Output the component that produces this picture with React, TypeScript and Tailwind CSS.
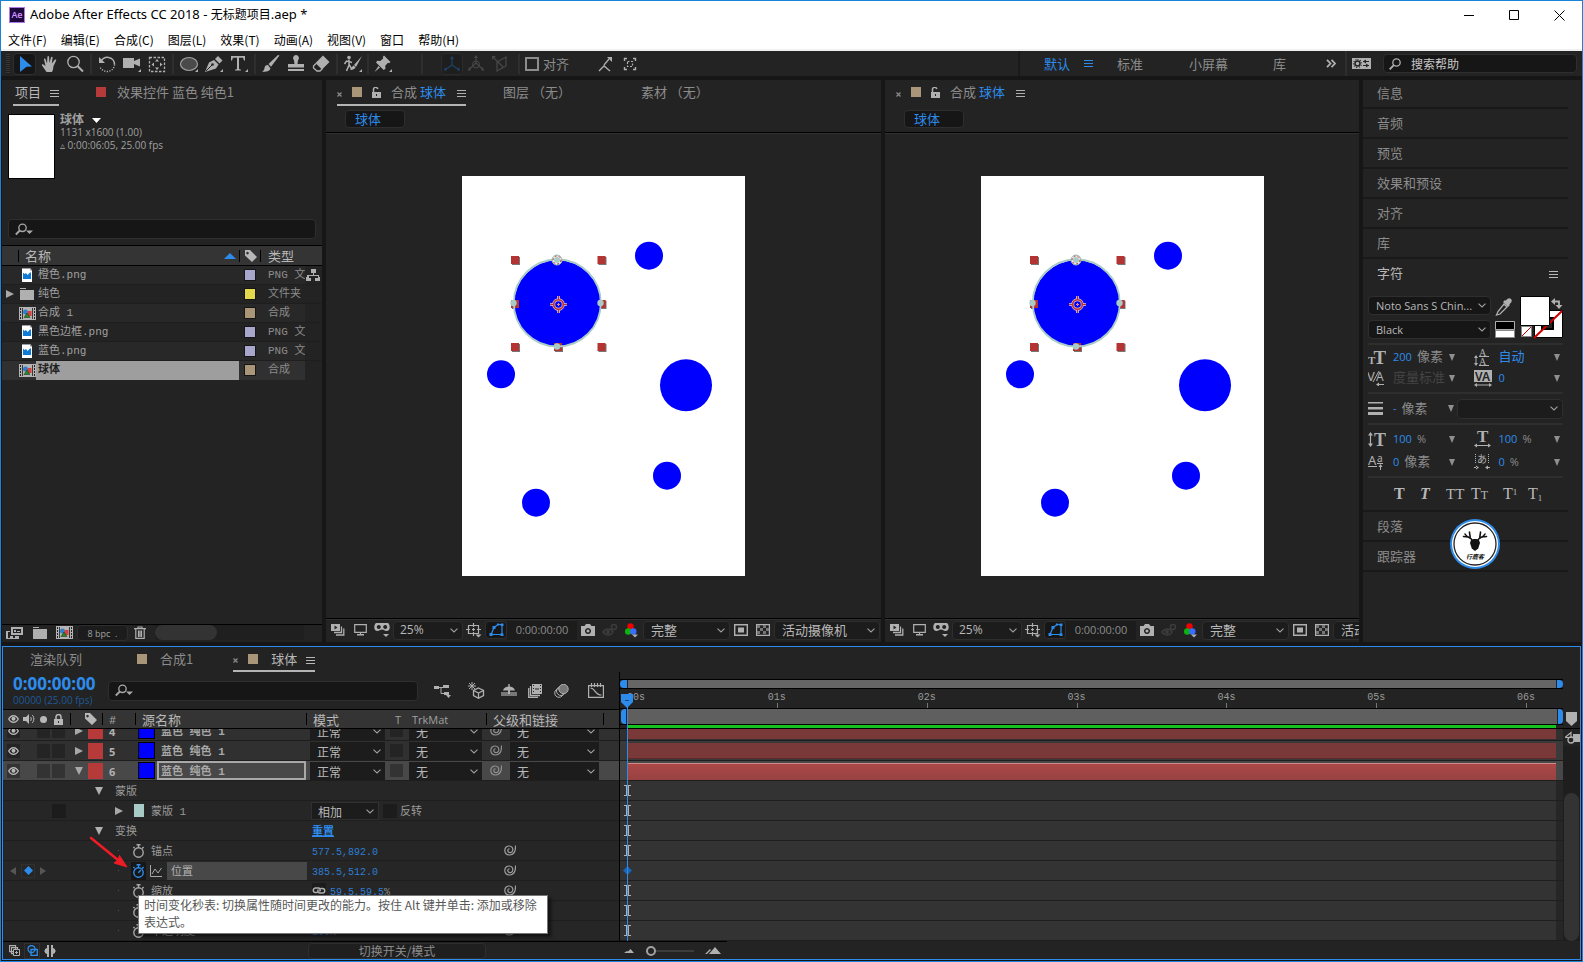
import React from "react";

type SvgProps = { w?: number; h?: number; vb?: string; className?: string; children: React.ReactNode };

function Svg({ w = 16, h = 16, vb, className = "", children }: SvgProps) {
  return (
    <svg width={w} height={h} viewBox={vb ?? `0 0 ${w} ${h}`} className={`shrink-0 ${className}`} fill="currentColor" aria-hidden="true">
      {children}
    </svg>
  );
}

const stroke = { fill: "none", stroke: "currentColor" } as const;

/* ---------- shared glyphs ---------- */

const MenuLines = ({ className = "" }: { className?: string }) => (
  <Svg w={9} h={8} className={className}>
    <path d="M0 0h9v1H0zM0 3h9v1H0zM0 6h9v1H0z" />
  </Svg>
);

const Chevron = () => (
  <Svg w={8} h={5}>
    <path {...stroke} d="M.5.7 4 4 7.500.7" strokeWidth="1.100" />
  </Svg>
);

const TriRight = () => (
  <Svg w={8} h={8}>
    <path d="M0 0v8l8-4z" />
  </Svg>
);

const TriDown = () => (
  <Svg w={8} h={8}>
    <path d="M0 0h8L4 8z" />
  </Svg>
);

const SmallDown = () => (
  <Svg w={6} h={7} className="text-[#8f8f8f]">
    <path d="M0 0h6L3 7z" />
  </Svg>
);

const Corner = () => <path d="M19 15v3h-3z" />;

const Tag = () => (
  <Svg w={13} h={12}>
    <path fillRule="evenodd" d="M1 0h5l7 7-5 5-7-6.500zM3.500 1.800a1.300 1.300 0 1 0 .01 0z" />
  </Svg>
);

const Eye = () => (
  <Svg w={11} h={8}>
    <path fillRule="evenodd" d="M5.500 0C8 0 10 1.800 11 4c-1 2.200-3 4-5.500 4S1 6.200 0 4c1-2.200 3-4 5.500-4zm0 1.200A5.500 5.500 0 0 0 1.400 4a5.500 5.500 0 0 0 4.100 2.800A5.500 5.500 0 0 0 9.600 4a5.500 5.500 0 0 0-4.100-2.800z" />
    <circle cx="5.500" cy="3.800" r="2" />
  </Svg>
);

const Lock = ({ open = false }: { open?: boolean }) => (
  <Svg w={9} h={11}>
    <path fillRule="evenodd" d="M0 5h9v6H0zM4 7v2h1V7z" />
    <path {...stroke} strokeWidth="1.500" d={open ? "M1.500 5V3a2.200 2.200 0 0 1 4.300-1" : "M2 5V3a2.500 2.500 0 0 1 5 0v2"} />
  </Svg>
);

const Whip = () => (
  <Svg w={12} h={11}>
    <path {...stroke} strokeWidth="1.200" d="M11.500.5c.2 3.500-.6 9-5.800 9.500C2.500 10.200.7 8 .8 5.300.9 2.500 3 .9 5.300 1c2.200.1 3.600 1.700 3.500 3.800C8.700 6.700 7.300 7.700 5.900 7.600 4.500 7.500 3.700 6.500 3.800 5.300c.1-1 .8-1.600 1.700-1.500" />
  </Svg>
);

const SearchDrop = () => (
  <Svg w={18} h={13}>
    <circle {...stroke} cx="7.500" cy="4.800" r="3.700" strokeWidth="1.300" />
    <path {...stroke} strokeWidth="1.800" d="M4.800 7.500.8 11.500" />
    <path d="M11 7.500h7l-3.500 3.500z" />
  </Svg>
);

const Stopwatch = ({ active = false }: { active?: boolean }) => (
  <Svg w={13} h={14}>
    <circle {...stroke} cx="6.500" cy="8.500" r="4.700" strokeWidth="1.400" />
    <path {...stroke} strokeWidth="1.400" d="M4.500.8h4M6.500 1v3M10.200 4.500l1.400-1.400M2.600 4.300 1.400 3.100" />
    {active && <path {...stroke} strokeWidth="1.300" d="M6.300 8.700 9 6" />}
  </Svg>
);

const CompIcon = () => (
  <Svg w={17} h={13}>
    <path fill="#b4b4b4" d="M0 0h17v13H0z" />
    <path fill="#232323" d="M1 1h1v2H1zM1 4h1v2H1zM1 7h1v2H1zM1 10h1v2H1zM15 1h1v2h-1zM15 4h1v2h-1zM15 7h1v2h-1zM15 10h1v2h-1z" />
    <path fill="#3a3a3a" d="M3 1h1v11H3zM13 1h1v11h-1z" />
    <circle cx="6.500" cy="5" r="2.500" fill="#2d7fd0" />
    <path fill="#d8423c" d="M8.500 4h4v5h-4z" />
    <path fill="#1e8d1e" stroke="#232323" strokeWidth=".5" d="m8 6 3 4.500H5z" />
  </Svg>
);

const FolderIcon = () => (
  <Svg w={14} h={12}>
    <path d="M0 0h6v1H0zM0 2h14v10H0z" />
  </Svg>
);

const PngIcon = () => (
  <Svg w={10} h={14}>
    <path fill="#fff" d="M0 0h8l2 2.500V14H0z" />
    <path fill="#9aa0a6" d="M0 0h8v1H0zM8 0v2.500h2z" />
    <path fill="#0f7bd8" d="M1 4.500l1.500 1.500L4 5l1.500 2L8 4.500h1V11H1z" />
  </Svg>
);

/* ---------- form controls ---------- */

function Select({ label, value, className, textClass = "text-[13px]" }: { label: string; value: string; className: string; textClass?: string }) {
  return (
    <label className={`relative flex min-w-0 items-center ${className}`}>
      <span className="sr-only">{label}</span>
      <select className={`h-full w-full appearance-none truncate bg-transparent pr-4 leading-4 text-[#b8b8b8] outline-none ${textClass}`} defaultValue={value}>
        <option>{value}</option>
      </select>
      <span className="pointer-events-none absolute right-1 text-[#a0a0a0]">
        <Chevron />
      </span>
    </label>
  );
}

/* ---------- window chrome ---------- */

function TitleBar() {
  return (
    <header className="bg-white text-black">
      <div className="flex h-7 items-center pl-2">
        <svg width="16" height="16" viewBox="0 0 16 16" aria-hidden="true">
          <rect x=".5" y=".5" width="15" height="15" fill="#1f0740" stroke="#b07ae0" />
          <text x="8" y="11" fontSize="9" textAnchor="middle" fill="#cf96fd" fontFamily="Open Sans" fontWeight="600">Ae</text>
        </svg>
        <h1 className="ml-[5px] font-['Noto_Sans','Noto_Sans_CJK_SC',sans-serif] text-[13px]">Adobe After Effects CC 2018 - <span className="text-xs">无标题项目</span>.aep *</h1>
        <div className="ml-auto flex">
          <button aria-label="最小化" className="flex h-7 w-[46px] items-center justify-center">
            <Svg w={10} h={10}><path d="M0 5h10v1H0z" /></Svg>
          </button>
          <button aria-label="最大化" className="flex h-7 w-11 items-center justify-center">
            <Svg w={10} h={10}><path {...stroke} d="M.5.5h9v9h-9z" /></Svg>
          </button>
          <button aria-label="关闭" className="flex h-7 w-[46px] items-center justify-center">
            <Svg w={11} h={11}><path {...stroke} d="m.5.5 10 10M10.500.5l-10 10" /></Svg>
          </button>
        </div>
      </div>
      <nav className="flex h-[22px] items-start gap-3.5 border-b-2 border-[#f0f0f0] pl-[7px] pt-[3px] text-xs leading-4">
        {["文件(F)", "编辑(E)", "合成(C)", "图层(L)", "效果(T)", "动画(A)", "视图(V)", "窗口", "帮助(H)"].map((m) => (
          <button key={m}>{m}</button>
        ))}
      </nav>
    </header>
  );
}

const Sep = ({ className = "w-[9px]" }: { className?: string }) => (
  <div className={`flex shrink-0 justify-center ${className}`}>
    <div className="h-5 w-0.5 bg-[#2e2e2e]" />
  </div>
);

function Tool({ name, active, dim, children }: { name: string; active?: boolean; dim?: boolean; children: React.ReactNode }) {
  return (
    <button
      aria-label={name}
      className={`flex h-[22px] w-[23px] shrink-0 items-center justify-center rounded-sm border ${active ? "border-[#2e2e2e] bg-[#161616] text-[#2d8ceb]" : "border-transparent"} ${dim ? "text-[#484848]" : active ? "" : "text-[#b0b0b0]"}`}
    >
      <Svg w={20} h={20}>{children}</Svg>
    </button>
  );
}

function Toolbar() {
  return (
    <div className="flex h-[25px] items-center bg-[#232323] text-[13px] text-[#8c8c8c]">
      <div className="mr-[3px] ml-[5px] h-5 w-1 bg-[repeating-linear-gradient(#3a3a3a_0_1px,#1c1c1c_1px_2px)]" />
      <div className="flex items-center gap-0.5">
        <Tool name="选取工具" active><path d="M5 2l12 10.500-5.500.3L5 18z" /></Tool>
        <Tool name="手形工具"><path d="M6.500 18 2 11.500c-.6-1 .6-1.700 1.400-1L5.500 12 4 5.500c-.2-1.200 1.200-1.500 1.500-.4L7 9.500 7.400 3c0-1.200 1.600-1.200 1.700 0l.3 6L11 3.500c.3-1.200 1.800-.9 1.600.3L11.800 9.500l3-3.700c.8-.9 1.900 0 1.300 1L13.500 12l-.5 3.500L12 18z" /></Tool>
        <Tool name="缩放工具"><circle {...stroke} cx="8.500" cy="8" r="5.700" strokeWidth="1.300" /><path {...stroke} strokeWidth="2" d="m12.500 12 5.500 5.500" /></Tool>
      </div>
      <Sep />
      <div className="flex items-center gap-0.5">
        <Tool name="旋转工具"><path {...stroke} strokeWidth="1.500" d="M4 7.500C5.500 4.500 8.500 3 11.500 3.400c3.500.5 6 3.500 6 7" /><path {...stroke} strokeWidth="1.400" strokeDasharray="1.200 1.400" d="M17.500 10.400c0 4-3.500 7.100-7.500 7.100-3 0-5.800-2-7-4.500" /><path d="M2 3v6h6z" /></Tool>
        <Tool name="摄像机工具"><path d="M1 4h11v3l6-2.500v8L12 10v4H1z" /><Corner /></Tool>
        <Tool name="锚点工具"><path {...stroke} strokeWidth="1.300" strokeDasharray="2.500 1.500" d="M2.500 3.500h15v14h-15z" /><path d="m10 5 2 2.500H8zM10 16l2-2.500H8zM4.500 10.500 7 8.500v4zM15.500 10.500 13 8.500v4z" /></Tool>
      </div>
      <Sep />
      <div className="flex items-center gap-0.5">
        <Tool name="椭圆工具"><ellipse cx="10" cy="10" rx="8.500" ry="6.500" fill="#4a4a4a" stroke="#a0a0a0" strokeWidth="1.200" /><Corner /></Tool>
        <Tool name="钢笔工具"><path d="M1 18 5 8.500 10 6l4.500 4.500L12 14.500z" /><path d="m11 5 3-3 4.500 4.500-3 3z" /><path stroke="#232323" strokeWidth="1" d="m2 17 6-6" /><circle cx="8.500" cy="10.500" r="1.300" fill="#232323" /><Corner /></Tool>
        <Tool name="文字工具"><path d="M2 2h14v4.500h-1L14 3.800h-4V15l2 .7v.8H6v-.8l2-.7V3.800H4L3 6.500H2z" /><Corner /></Tool>
      </div>
      <Sep />
      <div className="flex items-center gap-0.5">
        <Tool name="画笔工具"><path d="M18.500 1.500 17 1 7.500 10l2.500 2.800zM7 11c-2-.2-3.200 1-3.500 3C3.200 15.800 2.500 17 1 17.500c3.500.8 7.500 0 8.500-3z" /></Tool>
        <Tool name="仿制图章工具"><path d="M10 1a3 3 0 0 1 2 5.200L11.500 10H18v3.500H2V10h6.500L8 6.200A3 3 0 0 1 10 1zM2 15h16v2H2z" /></Tool>
        <Tool name="橡皮擦工具"><path d="M12 1.500 18.500 8 11 15.500 4.500 9z" /><path {...stroke} strokeWidth="1.300" d="M5 9.500 2.500 12v2L6 17h3l2.500-2.500" /></Tool>
      </div>
      <Sep />
      <Tool name="Roto 笔刷工具"><circle cx="6" cy="3.500" r="1.800" /><path {...stroke} strokeWidth="1.500" d="M6 5.500v5.500l-2.500 6M6 10.500l3 5M1.500 10l2-3L9 8.500" /><path d="M19 2 11 11l2 2zM10.500 11.500c-2 1-1.500 3-3.500 4 2.500.7 5-.3 5.500-2.200z" /><Corner /></Tool>
      <Sep className="w-[7px]" />
      <Tool name="操控点工具"><path d="m11 1.500 6.500 6.500-1.500 1.200-1-.4-2.800 3 .3 3L10.700 16 3 8.500l1.300-1.800 3 .3 3-2.800-.5-1.200zM5.500 12 7 13.500 1.500 18z" /><Corner /></Tool>
      <Sep className="ml-[21px] w-[14px]" />
      <div className="ml-3 flex items-center gap-px">
        <button aria-label="本地轴模式" className="flex size-[22px] items-center justify-center rounded-sm border border-[#2b2b2b] bg-[#1e1e1e] text-[#1d4469]">
          <Svg w={18} h={18}><path {...stroke} strokeWidth="1.200" d="M9 3v7L2 15M9 10l7 5" /><path d="m9 1 2 3H7zM1 16l1-4 2 3zM17 16l-1-4-2 3z" /></Svg>
        </button>
        <Tool name="世界轴模式" dim><path {...stroke} strokeWidth="1.200" d="M10 4v5L3 15.500M10 9l7 6.500" /><circle {...stroke} cx="10" cy="10.500" r="3.500" /><path d="m10 1 2 3H8zM2 17l1-4 2 3zM18 17l-1-4-2 3z" /></Tool>
        <Tool name="视图轴模式" dim><path {...stroke} strokeWidth="1.200" d="m4 4 9 9M7 8l9-5v9l-9 5z" /><path d="M2 2h4L2 6z" /></Tool>
      </div>
      <Sep className="ml-1 w-[7px]" />
      <label className="ml-[3px] flex items-center gap-1">
        <input type="checkbox" className="size-3.5 appearance-none border-2 border-[#8c8c8c]" />
        对齐
      </label>
      <div className="ml-6 flex items-center gap-0.5">
        <Tool name="对齐选项"><path {...stroke} strokeWidth="1.300" d="M4 17l5-5 6 5M9 11l5-6" /><path d="M12 3h5v5z" /></Tool>
        <Tool name="捕捉范围"><path {...stroke} strokeWidth="1.400" d="M4.500 7V4.500H7M13 4.500h2.500V7M15.500 13v2.500H13M7 15.500H4.500V13" /><path {...stroke} strokeDasharray="2 1.500" strokeWidth="1.200" d="M7.500 7.500h5v5h-5z" /></Tool>
      </div>

      <div className="ml-auto flex items-center">
        <div className="h-[25px] w-0.5 bg-[#1a1a1a]" />
        <button className="ml-6 text-[#2d8ceb]">默认</button>
        <button aria-label="工作区菜单" className="ml-3.5 text-[#2d8ceb]"><MenuLines /></button>
        <button className="ml-6">标准</button>
        <button className="ml-[46px]">小屏幕</button>
        <button className="ml-[45px]">库</button>
        <button aria-label="更多工作区" className="ml-10 text-[#b0b0b0]">
          <Svg w={10} h={9}><path {...stroke} strokeWidth="1.800" d="M1 .8 4.500 4.500 1 8.200M5.500.8 9 4.500 5.500 8.200" /></Svg>
        </button>
        <div className="ml-[9px] h-[25px] w-0.5 bg-[#2e2e2e]" />
        <button aria-label="工作区设置" className="ml-[5px] text-[#b0b0b0]">
          <Svg w={19} h={11}>
            <path d="M0 0h19v11H0z" />
            <circle cx="5.500" cy="5.500" r="2.500" fill="none" stroke="#232323" strokeWidth="1.500" />
            <path stroke="#232323" strokeWidth="1.200" strokeDasharray="1 1.500" fill="none" d="M5.500 1.500a4 4 0 1 1-.01 0" />
            <path fill="none" stroke="#232323" strokeWidth="1.200" d="M11 3.500h6M11 7.500h6" /><path fill="#232323" d="m11 3.500 3-2v4zM17 7.500l-3-2v4z" />
          </Svg>
        </button>
        <label className="mr-[5px] ml-3 flex h-[19px] w-[194px] items-center gap-2.5 rounded-sm border border-[#2e2e2e] bg-[#161616] pl-[5px] text-[#b0b0b0]">
          <Svg w={12} h={12}><circle {...stroke} cx="7.500" cy="4.500" r="3.700" strokeWidth="1.300" /><path {...stroke} strokeWidth="1.900" d="M4.800 7.200.7 11.300" /></Svg>
          <input aria-label="搜索帮助" placeholder="搜索帮助" className="min-w-0 flex-1 bg-transparent text-xs outline-none placeholder:text-[#c8c8c8]" />
        </label>
      </div>
    </div>
  );
}

/* ---------- project panel ---------- */

type Asset = { name: string; kind: "png" | "folder" | "comp"; type: string; color: string; selected?: boolean };

const assets: Asset[] = [
  { name: "橙色.png", kind: "png", type: "PNG 文件", color: "bg-[#a8a6cb]" },
  { name: "纯色", kind: "folder", type: "文件夹", color: "bg-[#e4d84c]" },
  { name: "合成 1", kind: "comp", type: "合成", color: "bg-[#a99577]" },
  { name: "黑色边框.png", kind: "png", type: "PNG 文件", color: "bg-[#a8a6cb]" },
  { name: "蓝色.png", kind: "png", type: "PNG 文件", color: "bg-[#a8a6cb]" },
  { name: "球体", kind: "comp", type: "合成", color: "bg-[#a99577]", selected: true },
];

function ProjectPanel() {
  return (
    <section className="flex w-[320px] shrink-0 flex-col bg-[#232323]">
      <div className="flex h-[26px] items-end text-[13px]">
        <div className="ml-[11px] flex h-full w-[46px] items-center justify-between border-b-2 border-[#b4b4b4] pl-0.5 text-[#b8b8b8]">
          项目 <MenuLines className="mt-1" />
        </div>
        <div className="ml-[37px] flex h-full items-center pb-0.5 text-[#8c8c8c]">
          <span className="mr-[11px] size-2.5 bg-[#b63a3a]" />
          效果控件 蓝色 纯色1
        </div>
      </div>
      <div className="flex px-1.5 pt-2">
        <div className="h-[65px] w-[47px] border border-black bg-white" />
        <div className="pl-[5px] font-['Open_Sans','Noto_Sans_CJK_SC',sans-serif] text-[10px] leading-[13px] text-[#a0a0a0]">
          <div className="flex items-center gap-2 text-xs leading-3 font-bold">
            球体
            <Svg w={9} h={5} className="text-white"><path d="M0 0h9L4.500 5z" /></Svg>
          </div>
          <div>1131 x1600 (1.00)</div>
          <div>▵ 0:00:06:05, 25.00 fps</div>
        </div>
      </div>
      <label className="mt-10 mr-1.5 ml-1.5 flex h-5 items-center rounded-sm border border-[#2e2e2e] bg-[#161616] pl-1.5 text-[#a8a8a8]">
        <SearchDrop />
        <input aria-label="搜索项目" className="min-w-0 flex-1 bg-transparent text-xs outline-none" />
      </label>
      <div className="mt-1.5 flex-1">
        <table className="w-full table-fixed border-collapse font-['Liberation_Mono','Noto_Sans_CJK_SC',monospace] text-[11px] text-[#a0a0a0]">
          <colgroup>
            <col className="w-[34px]" />
            <col className="w-[203px]" />
            <col className="w-[22px]" />
            <col />
            <col className="w-[17px]" />
          </colgroup>
          <thead>
            <tr className="h-5 border-y border-black bg-[#343434] text-left font-['Noto_Sans_CJK_SC',sans-serif] text-[13px] leading-4 text-[#b8b8b8]">
              <th colSpan={2} className="p-0 font-normal">
                <div className="flex items-center">
                  <span className="mr-1.5 ml-4 h-3 w-px bg-black" />
                  名称
                  <Svg w={12} h={6} className="mr-[3px] ml-auto text-[#2d8ceb]"><path d="M6 0l6 6H0z" /></Svg>
                </div>
              </th>
              <th className="p-0"><div className="flex h-3 items-center justify-center border-x border-black"><Tag /></div></th>
              <th colSpan={2} className="p-0 pl-[7px] font-normal">类型</th>
            </tr>
          </thead>
          <tbody>
            {assets.map((a) => (
              <tr key={a.name} className={`h-[19px] leading-[18px] ${a.selected ? "bg-[#303030]" : "border-b border-[#1e1e1e] odd:bg-[#282828]"}`}>
                <td className="p-0">
                  <div className="flex items-center justify-end">
                    {a.kind === "folder" && <span className="mr-1 text-[#a8a8a8]"><TriRight /></span>}
                    <span className="flex w-[18px] justify-center text-[#b0b0b0]">
                      {a.kind === "png" ? <PngIcon /> : a.kind === "folder" ? <FolderIcon /> : <CompIcon />}
                    </span>
                  </div>
                </td>
                <td className={`p-0 pl-0.5 ${a.selected ? "bg-[#9e9e9e] font-bold text-[#202020]" : ""}`}>{a.name}</td>
                <td className="p-0"><div className={`mx-auto size-2.5 outline outline-[#161616] ${a.color}`} /></td>
                <td className="overflow-hidden p-0 pl-[7px] whitespace-nowrap text-[#8c8c8c]">{a.type}</td>
                <td className="bg-[#232323] p-0 text-[#b0b0b0]">
                  {a.name === "橙色.png" && (
                    <Svg w={14} h={13} className="ml-px"><path d="M5 0h5v4H8v2h5v2h1v4H9V9h3V7H3v2h2v3H0V8h1V6h6V4H5z" /></Svg>
                  )}
                </td>
              </tr>
            ))}
          </tbody>
        </table>
      </div>
      <footer className="flex h-[18px] items-center border-t border-black pb-0.5 text-[#b0b0b0]">
        <button aria-label="解释素材" className="ml-1">
          <Svg w={17} h={12}><path fillRule="evenodd" d="M5 0h12v8H5zM7 2v4h8V2zM8 3h2v2H8zM11 4h3v1h-3zM1 4h3v1H2v6h11v1H0V4zM4 9h3v2H4zM9 9h4v2H9z" /></Svg>
        </button>
        <button aria-label="新建文件夹" className="ml-2.5"><FolderIcon /></button>
        <button aria-label="新建合成" className="ml-[9px]"><CompIcon /></button>
        <button className="ml-1 h-4 w-[51px] rounded-sm border border-[#2e2e2e] bg-[#1c1c1c] font-['Open_Sans',sans-serif] text-[9px] leading-[15px] text-[#a0a0a0]">8 bpc &nbsp;.</button>
        <button aria-label="删除" className="ml-1.5">
          <Svg w={12} h={13}><path {...stroke} strokeWidth="1.200" d="M0 2.600h12M4 2.500V1h4v1.500M1.800 3v9.400h8.400V3M4.500 4.500v6.500M6 4.500v6.500M7.500 4.500v6.500" /></Svg>
        </button>
        <div className="mr-[18px] ml-[9px] h-[15px] flex-1 bg-[#1f1f1f]"><div className="h-[15px] w-[62px] rounded-full bg-[#333]" /></div>
      </footer>
    </section>
  );
}

/* ---------- composition viewer ---------- */

const dots = [
  [187, 79.7, 14],
  [39, 198.3, 14],
  [224, 209.3, 26],
  [205, 299.7, 14],
  [74, 326.7, 14],
];

const handles = [
  [53, 84], [139.5, 84], [53, 128], [139.5, 128], [53, 171], [96, 171], [139.5, 171],
];

function Canvas() {
  return (
    <svg width="283" height="400" viewBox="0 0 283 400" role="img" aria-label="球体" className="shrink-0 bg-white">
      {dots.map(([x, y, r]) => <circle key={`${x}-${y}`} cx={x} cy={y} r={r} fill="#00f" />)}
      {handles.map(([x, y]) => (
        <g key={`${x}-${y}`}>
          <rect x={x - 3} y={y - 3} width="8" height="8" fill="#777" />
          <rect x={x - 4} y={y - 4} width="8" height="8" fill="#b43434" />
        </g>
      ))}
      <circle cx="95.500" cy="127.500" r="43.300" fill="#00f" />
      <path fill="#b43434" d="M51.500 124H57v8h-5.500zM92 167h8v4h-8zM138 124h5.500v8H138z" />
      <circle cx="95.300" cy="127" r="43.500" fill="none" stroke="#a9cbc8" strokeWidth="1.800" />
      <circle cx="95" cy="84" r="5" fill="#eee" stroke="#9dbdba" />
      <circle cx="95" cy="84" r="4" fill="none" stroke="#b43434" strokeDasharray="2 2" />
      <circle cx="95" cy="84" r="3" fill="#a9cbc8" />
      <circle cx="51.500" cy="127" r="3.200" fill="#a9cbc8" />
      <circle cx="138.500" cy="127" r="3.200" fill="#a9cbc8" />
      <circle cx="95" cy="170.500" r="3.200" fill="#a9cbc8" />
      <g fill="none">
        <path stroke="#e8c8d8" strokeWidth="2.600" d="M96.500 120v5M96.500 132v5M88 128.500h5M100 128.500h5" />
        <circle cx="96.500" cy="128.500" r="4.800" stroke="#d8b8d0" strokeWidth="3" />
        <circle cx="96.500" cy="128.500" r="4.800" stroke="#b43434" strokeWidth="1.600" />
        <path stroke="#b43434" d="M96.500 120v4M96.500 133v4M88 128.500h4M101 128.500h4" />
        <path stroke="#e08890" d="M96.500 127v3M95 128.500h3" />
      </g>
    </svg>
  );
}

const IconBtn = ({ name, className = "", children }: { name: string; className?: string; children: React.ReactNode }) => (
  <button aria-label={name} className={`flex h-[18px] w-[22px] shrink-0 items-center justify-center ${className}`}>
    {children}
  </button>
);

function Viewer({ className, full }: { className: string; full?: boolean }) {
  return (
    <section className={`flex min-w-0 flex-col overflow-hidden bg-[#232323] ${className}`}>
      <div className="flex h-[26px] items-start text-[13px] text-[#8c8c8c]">
        <div className={`ml-[11px] flex h-[26px] w-[129px] shrink-0 items-center border-b-2 ${full ? "border-[#b4b4b4]" : "border-transparent"}`}>
          <Svg w={5} h={5} className="mt-1"><path {...stroke} strokeWidth="1.200" d="m.5.5 4 4M4.500.5l-4 4" /></Svg>
          <span className="ml-2.5 size-2.5 bg-[#a99577]" />
          <span className="mr-2.5 ml-2.5 text-[#b0b0b0]"><Lock open /></span>
          合成&nbsp;<span className="text-[#2d8ceb]">球体</span>
          <MenuLines className="mt-1 ml-auto text-[#b0b0b0]" />
        </div>
        {full && (
          <>
            <button className="ml-[37px] h-6 shrink-0">图层 （无）</button>
            <button className="ml-[70px] h-6 shrink-0">素材 （无）</button>
          </>
        )}
      </div>
      <div className="flex h-[28px] items-start border-b border-[#303030] pt-1 pl-[19px] shadow-[inset_0_-1px_0_#000]">
        <button className="h-[18px] w-[60px] rounded-sm border border-[#2e2e2e] bg-[#161616] pl-[9px] text-left text-[13px] leading-[14px] text-[#2d8ceb]">球体</button>
      </div>
      <div className="flex flex-1 items-center justify-center py-6">
        <Canvas />
      </div>
      <footer className="flex h-6 shrink-0 items-center border-t border-black pb-px pl-px text-[#b0b0b0] shadow-[inset_0_1px_0_#303030]">
        <IconBtn name="始终预览此视图"><Svg w={14} h={12}><path fillRule="evenodd" d="M0 0h9v7H0zM3.500 1.500v4L6.500 3.500z" /><path {...stroke} strokeWidth="1.300" d="M10.500 2.500v6H3M12.800 4.500v6.500H5" /></Svg></IconBtn>
        <IconBtn name="主查看器"><Svg w={13} h={12}><path {...stroke} strokeWidth="1.200" d="M.7.700h11.600v7.600H.7z" /><path d="M6 8h1v2h3v1.500H3V10h3z" /></Svg></IconBtn>
        <IconBtn name="3D 眼镜"><Svg w={16} h={14}><path fillRule="evenodd" d="M2 0h12c2.500 2 2.500 8-1.500 8-2 0-2.500-1.500-4.500-1.500S5.500 8 3.500 8C-.5 8-.5 2 2 0zM4.800 2a2 2 0 1 0 .01 0zM11.200 2a2 2 0 1 0 .01 0z" /><path d="M9 11h6l-3 3z" /></Svg></IconBtn>
        <Select label="放大率" value="25%" className="h-[19px] w-[70px] shrink-0 rounded-sm border border-[#2e2e2e] bg-[#1c1c1c] pl-1.5" textClass="text-xs font-['Open_Sans',sans-serif]" />
        <IconBtn name="网格和参考线"><Svg w={16} h={15}><path {...stroke} strokeWidth="1.200" d="M2.500 2.500h10v8h-10zM7.500 0v4M7.500 9v4M0 6.500h4M11 6.500h4M6 6.500h3M7.500 5v3" /><path d="M9.500 11.500h6l-3 3z" /></Svg></IconBtn>
        <IconBtn name="切换蒙版" className="rounded-sm border border-[#2e2e2e] bg-[#161616] text-[#2d8ceb]"><Svg w={15} h={14}><path {...stroke} strokeWidth="1.200" d="M2 11.500 5 4.500l4-3h4v10z" /><path d="M.5 10h3v3h-3zM3.500 3h3v3h-3zM8 .5h2v2H8zM11.500.5h3v2.500h-3zM11.500 10.500h3v2.500h-3z" /></Svg></IconBtn>
        <button className="h-[19px] w-[70px] shrink-0 bg-[#1c1c1c] text-center font-['Open_Sans',sans-serif] text-[11px] text-[#8c8c8c]">0:00:00:00</button>
        <IconBtn name="拍摄快照"><Svg w={14} h={12}><path fillRule="evenodd" d="M0 2h3.500L5 0h4l1.500 2H14v10H0zM7 4a3 3 0 1 0 .01 0zM7 5.500a1.500 1.500 0 1 1-.01 0z" /></Svg></IconBtn>
        <IconBtn name="显示快照" className="text-[#3c3c3c]"><Svg w={16} h={14}><path {...stroke} strokeWidth="1.600" d="M1 9c3-4 8-4 10 0-2 4-7 4-10 0z" /><circle cx="6" cy="9" r="2" /><circle {...stroke} cx="12" cy="4" r="2.500" strokeWidth="1.500" /></Svg></IconBtn>
        <IconBtn name="显示通道"><Svg w={14} h={15}><circle cx="5.500" cy="3.500" r="3.200" fill="#f20000" /><circle cx="3.200" cy="8.500" r="3.200" fill="#0db30d" /><circle cx="8.300" cy="8.500" r="3.200" fill="#3a6cff" /><path d="M7 11.500h6l-3 3z" /></Svg></IconBtn>
        <Select label="分辨率" value="完整" className="h-[19px] w-[87px] shrink-0 rounded-sm border border-[#2e2e2e] bg-[#1c1c1c] pl-[7px]" />
        <IconBtn name="目标区域"><Svg w={14} h={12}><path {...stroke} strokeWidth="1.400" d="M.7.700h12.600v10.600H.7z" /><path d="M4 3.500h6v5H4z" /></Svg></IconBtn>
        <IconBtn name="透明网格"><Svg w={14} h={12}><path {...stroke} strokeWidth="1.200" d="M.6.600h12.800v10.800H.6z" /><path fill="#777" d="M1 1h3v3H1zM7 1h3v3H7zM4 4h3v3H4zM10 4h3v3h-3zM1 7h3v3H1zM7 7h3v3H7z" /></Svg></IconBtn>
        <Select label="3D 视图" value="活动摄像机" className="h-[19px] w-[106px] shrink-0 rounded-sm border border-[#2e2e2e] bg-[#1c1c1c] pl-[7px]" />
      </footer>
    </section>
  );
}

/* ---------- right-hand panels ---------- */

const Rule = ({ className = "" }: { className?: string }) => <div className={`h-0.5 bg-[#2e2e2e] ${className}`} />;

function Metric({ icon, value, unit, blueUnit, dim }: { icon: React.ReactNode; value: string; unit?: string; blueUnit?: boolean; dim?: boolean }) {
  return (
    <div className="flex h-5 items-center">
      <span className="flex w-[25px] shrink-0 items-center text-[#b0b0b0]">{icon}</span>
      <button className={`font-['Open_Sans','Noto_Sans_CJK_SC',sans-serif] ${dim ? "text-[13px] text-[#444]" : blueUnit ? "text-[13px] text-[#2d8ceb]" : "text-[11px] text-[#2d8ceb]"}`}>{value}</button>
      {unit && <span className={`ml-[5px] font-['Open_Sans','Noto_Sans_CJK_SC',sans-serif] text-[#8c8c8c] ${unit === "%" ? "text-[11px]" : "text-[13px]"}`}>{unit}</span>}
      <span className="mr-[3px] ml-auto"><SmallDown /></span>
    </div>
  );
}

const serif = "Liberation Serif";
const Glyph = ({ x, y, size, children }: { x: number; y: number; size: number; children: string }) => (
  <text x={x} y={y} fontSize={size} fontFamily={serif} fontWeight="700">{children}</text>
);

function CharacterPanel() {
  return (
    <div className="pl-[5px]">
      <div className="w-[195px]">
        <div className="flex pt-[9px]">
          <div className="flex flex-col gap-[5px]">
            <Select label="字体" value="Noto Sans S Chin..." className="h-[19px] w-[123px] rounded-sm border border-[#2e2e2e] bg-[#161616] pl-[7px]" textClass="text-[11px] font-['Open_Sans',sans-serif]" />
            <Select label="字体样式" value="Black" className="h-[19px] w-[123px] rounded-sm border border-[#2e2e2e] bg-[#161616] pl-[7px]" textClass="text-[11px] font-['Open_Sans',sans-serif]" />
          </div>
          <button aria-label="颜色" className="ml-1 text-[#b0b0b0]">
            <Svg w={68} h={43}>
              <path {...stroke} strokeWidth="1.300" d="m9 8 3 3-7 7-3.500 1L3 15.500z" />
              <path d="m8 6 2-2 .8.8C12 2.500 14.500 1.500 16 3c1.500 1.500.5 4-1.800 5.200L15 9l-2 2z" />
              <path fill="#000" stroke="#b0b0b0" d="M.5 25.500h19v8H.5z" />
              <path fill="#fff" stroke="#888" d="M.5 34.500h19v7H.5z" />
              <path fill="#fff" stroke="#000" d="M39.500 14.500h28v27h-28z" />
              <path fill="#232323" stroke="#000" strokeWidth="2" d="M47 22h11v11H47z" />
              <path stroke="#c00" strokeWidth="2" d="m39 42 28-27" />
              <path fill="#fff" stroke="#888" d="M26.500 30.500h10v10h-10z" />
              <path stroke="#c00" d="m27 40 9-9" />
              <path fill="#fff" stroke="#000" d="M25.500.5h29v29h-29z" />
              <path {...stroke} strokeWidth="1.800" d="M59 5.500h5V11" />
              <path d="M56 5.500 60 2v7zM60.500 9h7L64 13z" />
            </Svg>
          </button>
        </div>
        <Rule className="mt-1" />
        <div className="grid grid-cols-2 gap-x-4 gap-y-px pt-0.5 pb-1">
          <Metric icon={<Svg w={18} h={14}><Glyph x={5.5} y={13.5} size={19}>T</Glyph><Glyph x={0} y={13.5} size={11}>T</Glyph></Svg>} value="200" unit="像素" />
          <Metric icon={<Svg w={17} h={18}><text x="5" y="8" fontSize="10" fontFamily={serif}>A</text><text x="5" y="17" fontSize="10" fontFamily={serif}>A</text><path {...stroke} d="M5 8.500h10M5 17.500h10M2 8v8" /><path d="m2 7 2 3H0zM2 18l2-3H0z" /></Svg>} value="自动" blueUnit />
          <Metric icon={<Svg w={18} h={16}><text x="-1" y="11" fontSize="13" fontFamily="Noto Sans">V</text><text x="8" y="11" fontSize="12" fontFamily="Noto Sans">A</text><path {...stroke} d="m5 12 6-11M10 14.500h6" /><path d="m8 14.500 3-2v4z" /></Svg>} value="度量标准" dim />
          <Metric icon={<Svg w={18} h={17}><path d="M0 0h18v12H0z" /><text x="1" y="10.500" fontSize="12" fontFamily="Noto Sans" fill="#232323" fontWeight="600">VA</text><path {...stroke} d="M2 15h14" /><path d="m0 15 3-2v4zM18 15l-3-2v4z" /></Svg>} value="0" />
        </div>
        <Rule />
        <div className="flex h-[29px] items-center">
          <div className="w-[89px] shrink-0"><Metric icon={<Svg w={15} h={13}><path d="M0 0h15v1.500H0zM0 5h15v2.500H0zM0 10h15v3H0z" /></Svg>} value="-" unit="像素" /></div>
          <Select label="描边方式" value="" className="h-5 flex-1 rounded-sm border border-[#2e2e2e] bg-[#1c1c1c]" />
        </div>
        <Rule />
        <div className="grid grid-cols-2 gap-x-4 gap-y-[3px] pt-1 pb-1">
          <Metric icon={<Svg w={18} h={15}><Glyph x={6} y={14} size={18}>T</Glyph><path {...stroke} strokeWidth="1.200" d="M2.500 3v9" /><path d="m2.500 0 2.500 3.500H0zM2.500 15 5 11.500H0z" /></Svg>} value="100" unit="%" />
          <Metric icon={<Svg w={18} h={18}><Glyph x={3} y={12} size={17}>T</Glyph><path {...stroke} d="M2 15.500h13" /><path d="m0 15.500 3-2v4zM17 15.500l-3-2v4z" /></Svg>} value="100" unit="%" />
          <Metric icon={<Svg w={16} h={16}><text x="0" y="11" fontSize="13" fontFamily="Noto Sans">A</text><text x="9" y="8" fontSize="10" fontFamily="Noto Sans">a</text><path {...stroke} d="M0 12.500h9M9 9.500h6M12.500 11v5" /><path d="m12.500 10 2 3h-4z" /></Svg>} value="0" unit="像素" />
          <Metric icon={<Svg w={16} h={16}><text x="3" y="9" fontSize="10" fontFamily="Noto Sans CJK JP">あ</text><path {...stroke} strokeDasharray="1 1" d="M1.500 0v10M14.500 0v10" /><path d="m5 13.500-3-2v4zM11 13.500l3-2v4zM0 13h3v1H0zM13 13h3v1h-3z" /></Svg>} value="0" unit="%" />
        </div>
        <Rule />
        <div className="flex h-8 items-center pl-[26px] font-['Liberation_Serif',serif] text-base leading-none text-[#b8b8b8]">
          <button className="w-[26px] text-left font-bold">T</button>
          <button className="w-[26px] text-left font-bold italic">T</button>
          <button className="w-[25px] text-left text-[15px]">TT</button>
          <button className="w-8 text-left">T<span className="text-xs">T</span></button>
          <button className="w-[25px] text-left">T<sup className="text-[9px]">1</sup></button>
          <button className="text-left">T<sub className="text-[9px]">1</sub></button>
        </div>
      </div>
    </div>
  );
}

function StagBadge() {
  return (
    <div className="absolute -top-px left-[87px] size-[50px]">
      <svg width="50" height="50" viewBox="0 0 50 50" aria-hidden="true">
        <circle cx="25" cy="25" r="25" fill="#2d8ceb" />
        <circle cx="25" cy="25" r="23" fill="#fff" />
        <circle cx="25" cy="25" r="21" fill="none" stroke="#222" strokeWidth="1.300" />
        <path d="M21 21c2-1.500 6-1.500 8 0l1 3-1.800 5.500-3.200 2.500-3.200-2.500L20 24z" fill="#111" />
        <path d="M22 21c-1-3-5-2-7-6m3 3-4.500-.5M20 19c.5-2-.5-3.500-.5-6M28 21c1-3 5-2 7-6m-3 3 4.500-.5M30 19c-.5-2 .5-3.500.5-6" stroke="#111" strokeWidth="1.600" fill="none" strokeLinecap="round" />
        <text x="25" y="40" textAnchor="middle" fontSize="6" fontFamily="Noto Sans CJK SC" fontWeight="700" fontStyle="italic" fill="#111">行鹿客</text>
      </svg>
    </div>
  );
}

function SidePanels() {
  const row = "flex h-[30px] w-[205px] items-center border-b-2 border-[#191919] pb-px pl-[14px]";
  return (
    <aside className="w-[218px] shrink-0 bg-[#232323] text-[13px] text-[#8c8c8c]">
      <button className="flex h-[29px] w-[205px] items-center border-b-2 border-[#191919] pb-px pl-[14px]">信息</button>
      {["音频", "预览", "效果和预设", "对齐", "库"].map((t) => (
        <button key={t} className={row}>{t}</button>
      ))}
      <div className="flex h-7 w-[205px] items-center justify-between pr-2.5 pl-[14px] text-[#b8b8b8]">
        字符 <MenuLines className="mt-1" />
      </div>
      <CharacterPanel />
      <div className="h-0.5 w-[205px] bg-[#191919]" />
      <button className={row}>段落</button>
      <button className={row}>跟踪器</button>
    </aside>
  );
}

/* ---------- timeline ---------- */

const listFont = "pt-1 font-['Liberation_Mono','Noto_Sans_CJK_SC',monospace] text-[11px] leading-none";

function LayerRow({ index, selected }: { index: number; selected?: boolean }) {
  const field = "h-[18px] bg-[#1c1c1c] pl-[7px] pt-0.5 shrink-0";
  const box = selected ? "bg-[#333]" : "bg-[#242424]";
  return (
    <div className={`flex h-5 shrink-0 items-center border-b border-[#1e1e1e] ${selected ? "bg-[#484848]" : "bg-[#303030]"}`}>
      <button aria-label="可见性" className={`ml-1 flex h-3.5 w-[13px] items-center justify-center text-[#b8b8b8] ${box}`}><Eye /></button>
      <button aria-label="独奏" className={`ml-[17px] h-3.5 w-[13px] ${box}`} />
      <button aria-label="锁定" className={`ml-0.5 h-3.5 w-[13px] ${box}`} />
      <button aria-label="展开" className="ml-2.5 w-[13px] text-[#a8a8a8]">{selected ? <TriDown /> : <TriRight />}</button>
      <span className="h-4 w-[15px] bg-[#b63a3a]" />
      <span className="ml-1.5 w-[29px] pt-0.5 font-['Open_Sans',sans-serif] text-[11px] leading-none font-bold text-[#b0b0b0]">{index}</span>
      <span className="h-[17px] w-[17px] border border-black bg-[#00f]" />
      <span className={`ml-0.5 flex h-[19px] w-[149px] shrink-0 items-center pl-1 font-bold text-[#a8a8a8] ${listFont} ${selected ? "bg-[#484848] outline-2 -outline-offset-2 outline-[#a8a8a8]" : ""}`}>蓝色 纯色 1</span>
      <Select label="模式" value="正常" className={`ml-1 w-[75px] ${field}`} textClass="text-xs" />
      <button aria-label="保留透明度" className={`ml-[5px] h-[13px] w-[13px] ${box}`} />
      <Select label="TrkMat" value="无" className={`ml-1.5 w-[73px] ${field}`} textClass="text-xs" />
      <span className="flex w-7 justify-center text-[#909090]"><Whip /></span>
      <Select label="父级" value="无" className={`w-[89px] ${field}`} textClass="text-xs" />
    </div>
  );
}

const Row = ({ children }: { children?: React.ReactNode }) => (
  <div className="flex h-5 shrink-0 items-center border-b border-[#1e1e1e] bg-[#262626] text-[#9a9a9a]">{children}</div>
);

function PropRow({ name, value, unit, active, linked }: { name: string; value: string; unit?: string; active?: boolean; linked?: boolean }) {
  return (
    <Row>
      <div className="flex w-[128px] shrink-0 items-center text-[#555]">
        {active && (
          <>
            <button aria-label="上一个关键帧" className="ml-[7px]"><Svg w={6} h={8}><path d="M6 0v8L0 4z" /></Svg></button>
            <button aria-label="关键帧" className="ml-[5px] flex size-3.5 items-center justify-center border border-[#303030] text-[#2d8ceb]"><Svg w={9} h={9}><path d="m4.500 0 4.500 4.500L4.500 9 0 4.500z" /></Svg></button>
            <button aria-label="下一个关键帧" className="ml-[5px]"><Svg w={6} h={8}><path d="M0 0v8l6-4z" /></Svg></button>
          </>
        )}
        <span className="mr-3 ml-auto size-px bg-[#555]" />
      </div>
      <button aria-label="时间变化秒表" className={`flex h-[18px] w-[15px] items-center justify-center ${active ? "bg-[#161616] text-[#2d8ceb]" : "text-[#a8a8a8]"}`}><Stopwatch active={active} /></button>
      {active ? (
        <>
          <span className="ml-1 flex w-[17px] text-[#a8a8a8]"><Svg w={12} h={12}><path {...stroke} d="M.5 0v11.500H12M2 9l3-5 3 4 3.500-5" /></Svg></span>
          <span className={`flex h-[18px] w-[140px] items-center bg-[#484848] pl-1 text-[#b0b0b0] ${listFont}`}>{name}</span>
          <span className="w-[5px]" />
        </>
      ) : (
        <span className={`w-[166px] pl-[5px] ${listFont}`}>{name}</span>
      )}
      <div className="flex w-[187px] items-center text-[#2d7dd2]">
        {linked && <span className="mr-1 flex h-4 w-3.5 items-center bg-[#1c1c1c] text-[#b0b0b0]"><Svg w={14} h={7}><path {...stroke} strokeWidth="1.500" d="M5.500 5.500h-2a2 2 0 0 1 0-4.500h3a2 2 0 0 1 1 3.500M8.500 1.500h2a2 2 0 0 1 0 4.500h-3a2 2 0 0 1-1-3.500" /></Svg></span>}
        <button className="pt-1 font-['Liberation_Mono',monospace] text-[10px] leading-none">{value}</button>
        {unit && <span className="pt-1 font-['Liberation_Mono',monospace] text-[10px] leading-none text-[#8c8c8c]">{unit}</span>}
      </div>
      <span className="ml-[5px] text-[#a0a0a0]"><Whip /></span>
    </Row>
  );
}

function HeadBar() {
  return <span className="h-3 w-px shrink-0 bg-black" />;
}

const trackRows = [1, 2, 3, 4, 5, 6, 7, 8];
const keyframeRow = 5;

function Timeline() {
  return (
    <section className="relative border border-[#2d8ceb] bg-[#232323]">
      <div className="flex h-[25px] text-[13px] text-[#8c8c8c]">
        <button className="ml-[27px] h-6">渲染队列</button>
        <button className="ml-[55px] flex h-6 items-center"><span className="mr-[13px] size-2.5 bg-[#a99577]" />合成1</button>
        <div className="ml-10 flex h-full w-[82px] items-center border-b-2 border-[#b4b4b4] text-[#b8b8b8]">
          <Svg w={5} h={5} className="mt-1 text-[#8c8c8c]"><path {...stroke} strokeWidth="1.200" d="m.5.5 4 4M4.500.5l-4 4" /></Svg>
          <span className="mr-[13px] ml-2.5 size-2.5 bg-[#a99577]" />球体
          <MenuLines className="mt-1 ml-auto" />
        </div>
      </div>

      <div className="flex">
        {/* layer outline */}
        <div className="w-[616px] shrink-0">
          <div className="flex h-[37px] items-center">
            <div className="ml-2.5 w-[95px] font-['Open_Sans',sans-serif]">
              <div className="text-[17px] leading-[18px] font-bold whitespace-nowrap text-[#2d8ceb]">0:00:00:00</div>
              <div className="text-[10px] leading-[14px] whitespace-nowrap text-[#1d5896]">00000 (25.00 fps)</div>
            </div>
            <label className="flex h-5 w-[310px] items-center rounded-sm border border-[#2e2e2e] bg-[#161616] pl-1.5 text-[#a8a8a8]">
              <SearchDrop />
              <input aria-label="搜索图层" className="min-w-0 flex-1 bg-transparent text-xs outline-none" />
            </label>
            <div className="ml-4 flex items-center text-[#b0b0b0]">
              <button aria-label="合成微型流程图" className="w-[33px]"><Svg w={17} h={14}><path d="M0 2h5v3H0zM9 1h6v3H9zM10 8h5v3h-5zM12 11h5l-2.500 3z" /><path {...stroke} d="M5 3.500h4M7 3.500v6h3" /></Svg></button>
              <button aria-label="草图 3D" className="w-[34px]"><Svg w={18} h={17}><path {...stroke} d="M5 0v8M1 4h8M2 1l6 6M8 1 2 7" /><path {...stroke} strokeWidth="1.300" d="m11.500 6 5 2.500v5l-5 2.700-5-2.700v-5zM6.500 8.500l5 2.500 5-2.500M11.500 11v5" /></Svg></button>
              <button aria-label="隐藏图层" className="w-[27px]"><Svg w={16} h={13}><path d="M0 8h16v4H0z" fill="#777" /><path d="M2 6.500C3 1 13 1 14 6.500H9V10H7V6.500z" /><path d="M7.300 0h1.400v3H7.300z" /></Svg></button>
              <button aria-label="帧混合" className="w-[26px]"><Svg w={14} h={14}><path fillRule="evenodd" d="M4 0h10v10H4zM5 1v1h1V1zM5 4v1h1V4zM5 7v1h1V7zM12 1v1h1V1zM12 4v1h1V4zM12 7v1h1V7zM7 4.500v1h4v-1z" /><path {...stroke} strokeWidth="1.300" d="M2.500 2v9.500H12M.7 4v9.300H10" /></Svg></button>
              <button aria-label="运动模糊" className="w-[34px]"><Svg w={15} h={14}><circle {...stroke} cx="5" cy="9" r="4.300" /><circle {...stroke} cx="7" cy="7" r="4.500" /><circle cx="9.500" cy="5" r="4.700" fill="#777" stroke="currentColor" /></Svg></button>
              <button aria-label="图表编辑器"><Svg w={16} h={15}><path {...stroke} strokeWidth="1.200" d="M.6 2.600h14.800v11.800H.6zM3.500 0v4M6.500 0v4M9.500 0v4M12.500 0v4M2.500 5c5 0 4 7 11 7" /></Svg></button>
            </div>
          </div>
          <div className="flex h-5 items-center border-y border-black bg-[#343434] text-[13px] leading-none text-[#b8b8b8]">
            <span className="ml-[5px] w-[15px]"><Eye /></span>
            <span className="w-[17px]"><Svg w={12} h={10}><path d="M0 3h3l3-3v10L3 7H0z" /><path {...stroke} d="M7.500 3c1 1 1 3 0 4M9 1c2.500 2 2.500 6 0 8" /></Svg></span>
            <span className="w-3.5"><Svg w={7} h={7}><circle cx="3.500" cy="3.500" r="3.500" /></Svg></span>
            <span className="w-4"><Lock /></span>
            <HeadBar />
            <span className="flex w-[31px] justify-center pl-2"><Tag /></span>
            <HeadBar />
            <span className="w-8 pl-1.5 font-['Open_Sans',sans-serif] text-[11px] text-[#a0a0a0]">#</span>
            <HeadBar />
            <span className="w-[170px] pl-1.5">源名称</span>
            <HeadBar />
            <span className="w-[88px] pl-1.5">模式</span>
            <span className="w-[17px] font-['Open_Sans',sans-serif] text-[11px] text-[#a0a0a0]">T</span>
            <span className="w-[74px] font-['Open_Sans',sans-serif] text-[11px] text-[#a0a0a0]">TrkMat</span>
            <HeadBar />
            <span className="w-[116px] pl-1.5">父级和链接</span>
            <HeadBar />
          </div>
          <div className="flex h-3 flex-col justify-end overflow-hidden"><LayerRow index={4} /></div>
          <LayerRow index={5} />
          <LayerRow index={6} selected />
          <Row><span className="ml-[92px] w-5 text-[#b0b0b0]"><TriDown /></span><span className={listFont}>蒙版</span></Row>
          <Row>
            <span className="ml-[49px] h-3.5 w-3.5 bg-[#1c1c1c]" />
            <button aria-label="展开蒙版" className="ml-[49px] w-[19px] text-[#a8a8a8]"><TriRight /></button>
            <span className="mr-[7px] h-[13px] w-2.5 bg-[#a9cbc8]" />
            <span className={`w-40 ${listFont}`}>蒙版 1</span>
            <Select label="蒙版模式" value="相加" className="h-[18px] w-[68px] border border-[#303030] bg-[#1c1c1c] pt-px pl-1.5" textClass="text-xs" />
            <label className="ml-1 flex items-center gap-[3px]">
              <input type="checkbox" className="size-3.5 appearance-none bg-[#1c1c1c]" />
              <span className={listFont}>反转</span>
            </label>
          </Row>
          <Row><span className="ml-[92px] w-5 text-[#b0b0b0]"><TriDown /></span><span className={`w-[197px] ${listFont}`}>变换</span><button className={`font-bold text-[#2d8ceb] underline ${listFont}`}>重置</button></Row>
          <PropRow name="锚点" value="577.5,892.0" />
          <PropRow name="位置" value="385.5,512.0" active />
          <PropRow name="缩放" value="59.5,59.5" unit="%" linked />
          <PropRow name="旋转" value="0x+0.0°" />
          <PropRow name="不透明度" value="100" unit="%" />
        </div>

        {/* time ruler and tracks */}
        <div className="relative min-w-0 flex-1 border-l border-black">
          <div className="pt-[7px]">
            <div className="flex h-2.5 border-y border-black">
              <div className="w-[7px] rounded-l-full bg-[#2d8ceb]" />
              <div className="mx-px flex-1 bg-[#666]" />
              <div className="w-1.5 rounded-r-full bg-[#2d8ceb]" />
            </div>
            <div className="mr-[7px] ml-[7px] flex h-[19px] overflow-hidden">
              {["00s", "01s", "02s", "03s", "04s", "05s", "06s"].map((t, i) => (
                <div key={t} className="relative w-[16.13%] shrink-0">
                  <span className={`absolute top-[3px] ${i === 0 ? "left-0" : "-left-[9px]"} font-['Liberation_Mono',monospace] text-[10px] leading-3 text-[#9a9a9a]`}>{t}</span>
                  <span className="absolute bottom-0 left-0 h-[5px] w-px bg-[#777]" />
                </div>
              ))}
            </div>
            <div className="flex h-[17px] border-y border-black">
              <div className="ml-px w-[5px] rounded-l bg-[#2d8ceb]" />
              <div className="mx-px flex-1 bg-[#5f5f5f]" />
              <div className="w-[5px] rounded-r bg-[#2d8ceb]" />
            </div>
            <div className="h-1 border-b border-black pr-[7px] pl-[7px]"><div className="h-[3px] bg-[#16bf22]" /></div>
          </div>
          <div className="h-3 border-b border-[#1e1e1e] bg-[#303030] pr-[7px] pl-[7px]"><div className="h-2.5 bg-[#7a3939]" /></div>
          <div className="h-5 border-b border-[#1e1e1e] bg-[#3a3a3a] pt-0.5 pr-[7px] pl-[7px]"><div className="h-4 border-b border-[#5e2929] bg-[#7a3939]" /></div>
          <div className="h-5 border-b border-[#1e1e1e] bg-[#484848] pt-0.5 pr-[7px] pl-[7px]"><div className="h-[17px] border-t border-[#d08a8a] bg-linear-to-b from-[#ad4848] to-[#974242]" /></div>
          {trackRows.map((k) => (
            <div key={k} className="flex h-5 items-center border-b border-[#1e1e1e] bg-[#333]">
              <span className="flex w-[15px] justify-center text-[#b0b0b0]">
                {k === keyframeRow
                  ? <Svg w={9} h={9} className="text-[#1a66b4]"><path d="m4.500 0 4.500 4.500L4.500 9 0 4.500z" /></Svg>
                  : <Svg w={7} h={11}><path d="M0 0h7v1H5v9h2v1H0v-1h2V1H0z" /></Svg>}
              </span>
              <span className="ml-auto h-[19px] w-[7px] bg-[#262626]" />
            </div>
          ))}
          <div className="pointer-events-none absolute top-[22px] bottom-0 left-px text-[#2d8ceb]">
            <Svg w={12} h={14}><path d="M0 0h12v8l-6 6-6-6z" /><path fill="#1b4a78" d="M4 6h4v1H4z" /></Svg>
            <div className="absolute top-3 bottom-0 left-[6px] w-px bg-[#2d8ceb]" />
          </div>
        </div>

        {/* scrollbar */}
        <div className="flex w-[17px] shrink-0 flex-col items-center pt-10 text-[#b0b0b0]">
          <Svg w={11} h={14}><path d="M0 0h11v9l-5.500 5L0 9z" /></Svg>
          <div className="mt-0.5 w-full border-t border-black pt-0.5 pb-px"><Svg w={15} h={14} className="ml-0.5"><path d="M8 3h7v8H8z" /><circle cx="6" cy="9" r="3" fill="#232323" stroke="currentColor" strokeWidth="1.300" /><path {...stroke} strokeWidth="1.200" d="M0 6.500 6 1.500v5z" /></Svg></div>
          <div className="flex w-full flex-1 flex-col justify-end bg-[#1e1e1e] px-px"><div className="h-[148px] rounded-full bg-[#333]" /></div>
        </div>
      </div>

      <footer className="flex h-[18px] items-center text-[#b0b0b0]">
        <div className="flex h-full w-[724px] items-center border-t border-black">
          <button aria-label="图层开关" className="ml-1.5"><Svg w={11} h={11}><path {...stroke} strokeWidth="1.100" d="M.6.600h6v6h-6zM2.500 2.600h6v6h-6z" /><path fill="#232323" stroke="currentColor" d="M4.500 4.500h6v6h-6z" /><path d="M7 6h1v3H7zM6 7h3v1H6z" /></Svg></button>
          <button aria-label="转换控制" className="ml-1 flex h-4 w-4 items-center justify-center border border-[#303030] text-[#2d8ceb]"><Svg w={11} h={11}><circle {...stroke} cx="4.500" cy="4" r="3.500" strokeWidth="1.300" /><path {...stroke} strokeWidth="1.300" d="M4 4.500h6.300v6H4z" /></Svg></button>
          <button aria-label="入点出点" className="ml-1"><Svg w={12} h={12}><path d="M3 0h2v12H3V9L1 8V6.500H0v-1h1V4l2-1zM9 0H7v12h2V9l2-1V6.500h1v-1h-1V4L9 3z" /></Svg></button>
          <button className="ml-[252px] h-4 w-[178px] rounded-sm border border-[#2e2e2e] bg-[#1f1f1f] text-xs leading-[14px] text-[#8c8c8c]">切换开关/模式</button>
          <Svg w={10} h={4} className="ml-[138px]"><path d="m0 4 3-2 1 .5L6.500 0 10 4z" /></Svg>
          <label className="ml-3 flex h-3 w-12 items-center">
            <span className="sr-only">缩放时间轴</span>
            <input type="range" min="0" max="100" defaultValue="0" className="h-0.5 w-12 appearance-none bg-[#3c3c3c] [&::-webkit-slider-thumb]:size-2.5 [&::-webkit-slider-thumb]:appearance-none [&::-webkit-slider-thumb]:rounded-full [&::-webkit-slider-thumb]:border-2 [&::-webkit-slider-thumb]:border-[#a0a0a0] [&::-webkit-slider-thumb]:bg-[#232323]" />
          </label>
          <Svg w={16} h={7} className="ml-[11px]"><path d="m4 7 6-7 6 7zM0 7l5-5 1 1-4 4z" /></Svg>
        </div>
      </footer>

      <div role="tooltip" className="absolute top-[248px] left-[135px] w-[410px] border border-[#767676] bg-white pr-1 pb-[3px] pl-[5px] text-xs leading-[17px] text-[#575757] shadow-[3px_3px_3px_rgba(0,0,0,0.5)]">
        时间变化秒表: 切换属性随时间更改的能力。按住 Alt 键并单击: 添加或移除表达式。
      </div>
      <svg className="pointer-events-none absolute top-[188px] left-[85px]" width="42" height="34" viewBox="0 0 42 34" aria-hidden="true">
        <path d="M3 3 30 25" stroke="#ee1c25" strokeWidth="2.600" strokeLinecap="round" />
        <path d="M39 32 26 28l4-3 1.500-4.500z" fill="#ee1c25" stroke="#ee1c25" />
      </svg>
    </section>
  );
}

export default function App() {
  return (
    <div className="flex min-h-screen flex-col border border-[#1883d7] bg-[#161616] font-['Noto_Sans_CJK_SC','Noto_Sans',sans-serif] leading-normal">
      <TitleBar />
      <Toolbar />
      <main className="flex flex-1 flex-col gap-1 px-px pt-1 pb-px">
        <div className="flex flex-1 gap-1">
          <ProjectPanel />
          <Viewer className="flex-[555]" full />
          <Viewer className="flex-[474]" />
          <div className="relative flex shrink-0">
            <SidePanels />
            <div className="absolute top-[440px] left-0"><StagBadge /></div>
          </div>
        </div>
        <Timeline />
      </main>
    </div>
  );
}
